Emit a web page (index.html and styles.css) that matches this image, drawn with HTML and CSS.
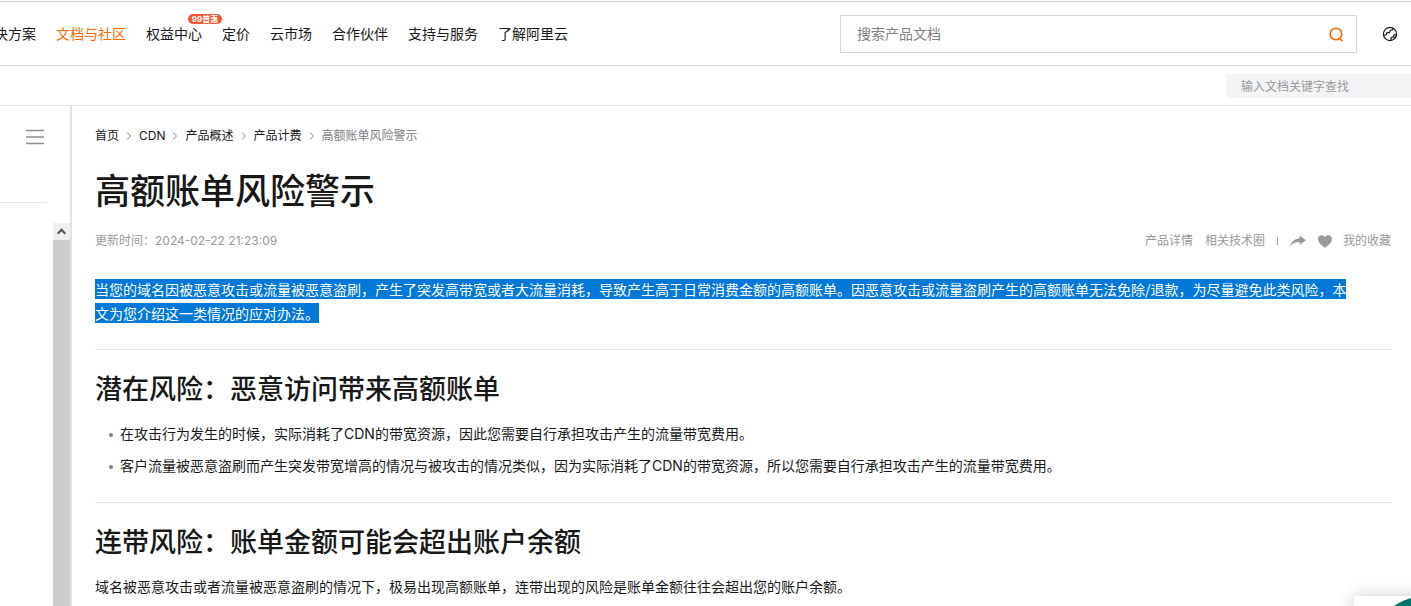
FILE: index.html
```html
<!DOCTYPE html>
<html lang="zh-CN">
<head>
    <meta charset="UTF-8">
    <meta name="viewport" content="width=device-width, initial-scale=1.0">
    <title>高额账单风险警示</title>
    <link rel="stylesheet" href="styles.css">
</head>
<body>
    <!-- Top navigation -->
    <header class="header">
        <nav class="main-nav">
            <a href="#">解决方案</a>
            <a href="#" class="active">文档与社区</a>
            <a href="#" class="has-badge">权益中心<span class="badge">99普惠</span></a>
            <a href="#">定价</a>
            <a href="#">云市场</a>
            <a href="#">合作伙伴</a>
            <a href="#">支持与服务</a>
            <a href="#">了解阿里云</a>
        </nav>
        <form class="search">
            <input type="text" placeholder="搜索产品文档" aria-label="搜索产品文档">
            <button type="button" aria-label="搜索">
                <svg width="16" height="16" viewBox="0 0 16 16" fill="none" stroke="#ff6a00" stroke-width="1.6">
                    <circle cx="8" cy="8" r="5.8"/>
                    <path d="M11.600 12.200l3 3"/>
                </svg>
            </button>
        </form>
        <button type="button" class="lang" aria-label="语言">
            <svg width="16" height="16" viewBox="0 0 16 16" fill="none" stroke="#181818" stroke-width="1.2">
                <circle cx="8" cy="8" r="6.6"/>
                <path d="M1.600 9.500L4.300 8.600 5 6.500 7.300 6.800 8.300 4.200 10.600 3.800 11 2.200"/>
                <path d="M8.800 14.400L9.300 11.400 11.600 10.800 12 9 14.500 8.600M11.600 10.800L12.600 12.400"/>
            </svg>
        </button>
    </header>

    <div class="sub-bar">
        <input type="text" placeholder="输入文档关键字查找" aria-label="输入文档关键字查找">
    </div>

    <div class="page">
        <!-- Collapsed sidebar -->
        <aside class="sidebar">
            <div class="sidebar-top">
                <button type="button" class="menu" aria-label="目录">
                    <svg width="18" height="16" viewBox="0 0 18 16" stroke="#8f8f8f" stroke-width="1.4">
                        <path d="M0 1.5h18M0 8h18M0 14.5h18"/>
                    </svg>
                </button>
            </div>
            <div class="scrollbar">
                <div class="scroll-up">
                    <svg width="9" height="7" viewBox="0 0 9 7" fill="none" stroke="#505050" stroke-width="2">
                        <path d="M.7 5.7l3.8-3.9 3.8 3.9"/>
                    </svg>
                </div>
            </div>
        </aside>

        <main class="content">
            <nav class="breadcrumb">
                <a href="#">首页</a>
                <svg width="6" height="8" viewBox="0 0 6 8"><path d="M1 .5L4.5 4 1 7.5"/></svg>
                <a href="#">CDN</a>
                <svg width="6" height="8" viewBox="0 0 6 8"><path d="M1 .5L4.5 4 1 7.5"/></svg>
                <a href="#">产品概述</a>
                <svg width="6" height="8" viewBox="0 0 6 8"><path d="M1 .5L4.5 4 1 7.5"/></svg>
                <a href="#">产品计费</a>
                <svg width="6" height="8" viewBox="0 0 6 8"><path d="M1 .5L4.5 4 1 7.5"/></svg>
                <span>高额账单风险警示</span>
            </nav>

            <h1>高额账单风险警示</h1>

            <div class="meta">
                <span class="updated">更新时间：2024-02-22 21:23:09</span>
                <a href="#">产品详情</a>
                <a href="#">相关技术圈</a>
                <span class="divider"></span>
                <button type="button" aria-label="分享">
                    <svg width="16" height="12" viewBox="0 0 16 12" fill="#999">
                        <path d="M9.6 .6L16 5.2 9.6 9.8V7.1C5.6 7 2.6 8 0 11.4 1.2 6.8 4.2 3.8 9.6 3.400z"/>
                    </svg>
                </button>
                <button type="button" class="favorite">
                    <svg width="14" height="13" viewBox="0 0 14 13" fill="#999">
                        <path d="M7 12.8C5.5 11.5 0 8.3 0 4 0 1.6 1.7 .3 3.6 .3 5 .3 6.3 .9 7 2 7.7 .9 9 .3 10.4 .3 12.3 .3 14 1.6 14 4 14 8.3 8.5 11.5 7 12.8z"/>
                    </svg>
                    我的收藏
                </button>
            </div>

            <p class="intro"><span class="selected">当您的域名因被恶意攻击或流量被恶意盗刷，产生了突发高带宽或者大流量消耗，导致产生高于日常消费金额的高额账单。因恶意攻击或流量盗刷产生的高额账单无法免除/退款，为尽量避免此类风险，本文为您介绍这一类情况的应对办法。</span></p>

            <section>
                <h2>潜在风险：恶意访问带来高额账单</h2>
                <ul>
                    <li>在攻击行为发生的时候，实际消耗了CDN的带宽资源，因此您需要自行承担攻击产生的流量带宽费用。</li>
                    <li>客户流量被恶意盗刷而产生突发带宽增高的情况与被攻击的情况类似，因为实际消耗了CDN的带宽资源，所以您需要自行承担攻击产生的流量带宽费用。</li>
                </ul>
            </section>

            <section>
                <h2>连带风险：账单金额可能会超出账户余额</h2>
                <p>域名被恶意攻击或者流量被恶意盗刷的情况下，极易出现高额账单，连带出现的风险是账单金额往往会超出您的账户余额。</p>
            </section>
        </main>
    </div>

    <!-- Floating helper -->
    <div class="float-box">
        <div class="float-circle"></div>
    </div>
</body>
</html>
```

FILE: styles.css
```css
* {
    box-sizing: border-box;
}
body {
    display: flex;
    flex-direction: column;
    height: 100vh;
    margin: 0;
    overflow: hidden;
    font-family: Inter, "Noto Sans CJK SC", sans-serif;
    font-size: 14px;
    line-height: 24px;
    color: #181818;
    background: #fff;
}
a {
    color: inherit;
    text-decoration: none;
}
button {
    display: flex;
    align-items: center;
    padding: 0;
    border: none;
    background: none;
    font: inherit;
    color: inherit;
    cursor: pointer;
}
input {
    font: inherit;
    outline: none;
}

/* Header */
.header {
    display: flex;
    flex-shrink: 0;
    align-items: center;
    height: 65px;
    margin-top: 1px;
    padding-right: 13px;
    border-top: 1px solid #ccc;
    border-bottom: 1px solid #d8d8d8;
}
.main-nav {
    display: flex;
    gap: 20px;
    margin-left: -20px;
    white-space: nowrap;
}
.main-nav .active {
    color: #ff6a00;
}
.has-badge {
    position: relative;
}
.badge {
    position: absolute;
    top: -8px;
    right: -20px;
    width: 34px;
    height: 10px;
    border-radius: 5px;
    background: #f15533;
    color: #fff;
    font-size: 8px;
    font-weight: 700;
    line-height: 10px;
    text-align: center;
}
.search {
    display: flex;
    width: 517px;
    height: 38px;
    margin-left: auto;
    border: 1px solid #d8d8d8;
}
.search input {
    flex: 1;
    padding: 0 16px;
    border: none;
}
.search input::placeholder {
    color: #808080;
}
.search button {
    padding-right: 12px;
}
.lang {
    margin-left: 25px;
}

.sub-bar {
    display: flex;
    flex-shrink: 0;
    justify-content: flex-end;
    align-items: center;
    height: 40px;
    border-bottom: 1px solid #e0e0e0;
}
.sub-bar input {
    width: 185px;
    height: 24px;
    padding: 2px 15px 0;
    border: none;
    background: #f3f4f6;
    font-size: 12px;
}
.sub-bar input::placeholder {
    color: #999;
}

/* Page body */
.page {
    display: flex;
    flex: 1;
    min-height: 0;
}
.sidebar {
    display: flex;
    flex-direction: column;
    flex-shrink: 0;
    width: 72px;
    border-right: 2px solid #e3e3e3;
}
.sidebar-top {
    height: 97px;
    margin: 0 24px 20px 0;
    padding: 23px 0 0 26px;
    border-bottom: 1px solid #e5e5e5;
}
.scrollbar {
    flex: 1;
    width: 17px;
    margin-left: auto;
    background: #cdcdcd;
}
.scroll-up {
    display: flex;
    align-items: center;
    justify-content: center;
    height: 17px;
    background: #f0f0f0;
}
.content {
    flex: 1;
    padding: 18px 20px 0 23px;
}
.breadcrumb {
    display: flex;
    align-items: center;
    gap: 7px;
    font-size: 12px;
}
.breadcrumb svg {
    fill: none;
    stroke: #808080;
}
.breadcrumb span {
    color: #808080;
}
h1 {
    margin: 20px 0 15px;
    font-size: 35px;
    font-weight: 500;
    line-height: 46px;
}
.meta {
    display: flex;
    align-items: center;
    gap: 12px;
    margin-bottom: 24px;
    font-size: 12px;
    color: #999;
}
.updated {
    margin-right: auto;
}
.divider {
    width: 1px;
    height: 8px;
    background: #999;
}
.favorite {
    gap: 11px;
}
.intro {
    margin: 0 0 24px;
    padding-right: 32px;
    font-family: "Noto Sans CJK SC", sans-serif;
}
.selected {
    background: #0078d7;
    color: #fff;
}
section {
    border-top: 1px solid #e5e5e5;
}
h2 {
    margin: 24px 0 16px;
    font-size: 27px;
    font-weight: 500;
    line-height: 32px;
}
ul {
    margin: 0 0 24px;
    padding: 0 0 0 25px;
    list-style: none;
}
li {
    position: relative;
    margin-bottom: 8px;
}
li::before {
    content: "";
    position: absolute;
    top: 11px;
    left: -11px;
    width: 4px;
    height: 4px;
    border-radius: 50%;
    background: #808080;
}
section p {
    margin: 0;
}

/* Floating helper */
.float-box {
    position: fixed;
    right: -73px;
    bottom: -120px;
    width: 130px;
    height: 130px;
    background: #fff;
    box-shadow: 0 0 16px rgba(0, 0, 0, 0.2);
}
.float-circle {
    width: 120px;
    height: 120px;
    margin-left: 13px;
    border-radius: 50%;
    background: #00736a;
}
```
